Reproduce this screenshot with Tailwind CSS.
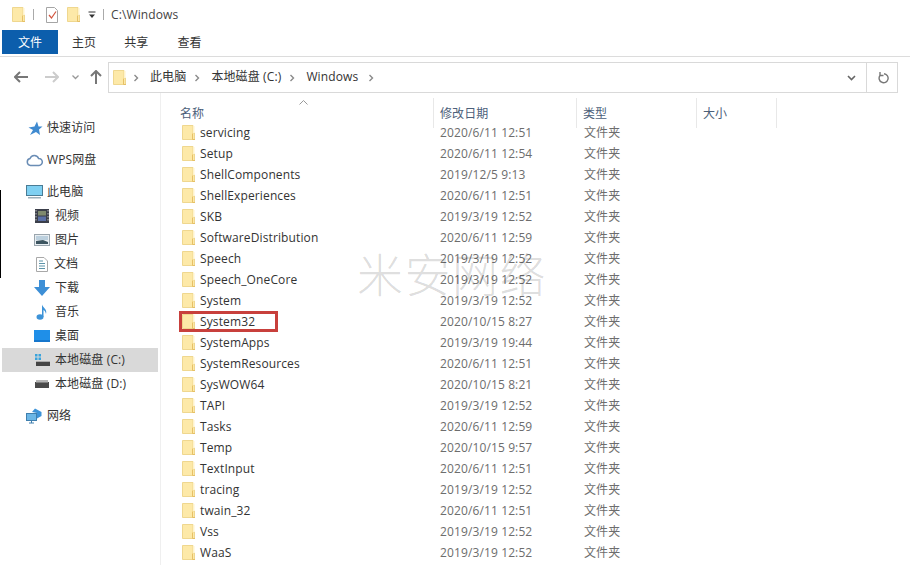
<!DOCTYPE html>
<html lang="zh-CN">
<head>
  <meta charset="UTF-8" />
  <title>C:\Windows</title>
  <script src="https://cdn.jsdelivr.net/npm/@tailwindcss/browser@4"></script>
</head>
<body class="bg-white w-[910px] h-[565px] overflow-hidden relative text-[12px] leading-none tracking-[0.12px] text-[#333] font-['Open_Sans','Noto_Sans_CJK_SC',sans-serif]">
  <svg class="hidden">
    <symbol id="folder" viewBox="0 0 13 15">
      <path d="M0.500 0.500H11V8H12.500V14.500H0.500Z" fill="#fde9a8" stroke="#efd78f"/>
      <path d="M11 1H12.500V8H11Z" fill="#fff3cc"/>
      <path d="M10.500 8.500V14.500H13" fill="none" stroke="#e6c066"/>
    </symbol>
    <symbol id="sep" viewBox="0 0 6 8">
      <path d="M1.500 1L4.500 4L1.500 7" fill="none" stroke="#8a8a8a" stroke-width="1.400"/>
    </symbol>
  </svg>

  <!-- title bar -->
  <div class="h-[29px] flex items-center pl-3">
    <svg class="w-[13px] h-[15px]"><use href="#folder"/></svg>
    <div class="w-px h-[11px] bg-[#aaa] ml-2"></div>
    <svg class="w-[14px] h-4 ml-[11px]" viewBox="0 0 14 16">
      <path d="M1.500 0.500H9.500L12.500 3.500V15.500H1.500Z" fill="#fff" stroke="#a5a5a5"/>
      <path d="M4 8L6.500 11L11 4.500" fill="none" stroke="#d2553f" stroke-width="1.200"/>
    </svg>
    <svg class="w-[13px] h-[15px] ml-2"><use href="#folder"/></svg>
    <svg class="w-2 h-2 ml-2" viewBox="0 0 8 8">
      <path d="M0.500 1H7.500" stroke="#333"/><path d="M1 3.500H7L4 7Z" fill="#333"/>
    </svg>
    <div class="w-px h-[11px] bg-[#aaa] ml-[7px]"></div>
    <span class="ml-[7px] text-[#444]">C:\Windows</span>
  </div>

  <!-- ribbon tabs -->
  <div class="h-[28px] flex items-start border-b border-[#dcdcdc] pl-[2px] pt-px">
    <div class="w-[56px] h-6 pt-[2px] bg-[#0c5eac] text-white flex items-center justify-center">文件</div>
    <div class="ml-[14px] h-6 pt-[2px] flex items-center">主页</div>
    <div class="ml-[28px] h-6 pt-[2px] flex items-center">共享</div>
    <div class="ml-[29px] h-6 pt-[2px] flex items-center">查看</div>
  </div>

  <!-- navigation and address bar -->
  <div class="h-[36px] pt-[5px] flex items-start">
    <div class="w-[108px] h-[30px] shrink-0 flex items-center pl-[14px]">
      <svg class="w-[14px] h-3" viewBox="0 0 14 12"><path d="M6 1L1 6L6 11M1 6H14" fill="none" stroke="#777" stroke-width="2"/></svg>
      <svg class="w-[14px] h-3 ml-[17px]" viewBox="0 0 14 12"><path d="M8 1L13 6L8 11M13 6H0" fill="none" stroke="#ccc" stroke-width="2"/></svg>
      <svg class="w-[7px] h-[5px] ml-[13px]" viewBox="0 0 7 5"><path d="M0.500 0.500L3.500 3.500L6.500 0.500" fill="none" stroke="#999" stroke-width="1.300"/></svg>
      <svg class="w-3 h-[14px] ml-[11px]" viewBox="0 0 12 14"><path d="M1 6L6 1L11 6M6 1V14" fill="none" stroke="#777" stroke-width="2"/></svg>
    </div>
    <div class="w-[790px] h-[31px] border border-[#d9d9d9] flex items-center">
      <svg class="w-[13px] h-[15px] ml-1"><use href="#folder"/></svg>
      <svg class="w-[6px] h-2 ml-[7px]"><use href="#sep"/></svg>
      <span class="ml-[11px] pb-[2px]">此电脑</span>
      <svg class="w-[6px] h-2 ml-[8px]"><use href="#sep"/></svg>
      <span class="ml-[11px] pb-[2px]">本地磁盘 (C:)</span>
      <svg class="w-[6px] h-2 ml-[8px]"><use href="#sep"/></svg>
      <span class="ml-[11px] pb-[2px]">Windows</span>
      <svg class="w-[6px] h-2 ml-[10px]"><use href="#sep"/></svg>
      <svg class="w-[9px] h-[6px] ml-auto" viewBox="0 0 9 6"><path d="M1 1L4.500 4.500L8 1" fill="none" stroke="#666" stroke-width="1.600"/></svg>
      <div class="w-[31px] h-full border-l border-[#d9d9d9] ml-[10px] flex items-center justify-center">
        <svg class="w-3 h-[13px] ml-px" viewBox="0 0 12 13"><path d="M3 1V4.500H6.500M3 4.500A4.500 4.500 0 1 0 7 2.700" fill="none" stroke="#777" stroke-width="1.400"/></svg>
      </div>
    </div>
  </div>

  <div class="flex h-[472px]">
    <!-- side pane -->
    <nav class="w-[161px] shrink-0 border-r border-[#efefef] pt-[23px] pl-[2px]">
      <div class="w-[156px] h-6 flex items-center pl-[26px]">
        <svg class="w-[15px] h-[15px]" viewBox="0 0 15 15"><path d="M9 0.500L10.500 5.500L14.500 5.500L11 8.500L12 14L8 11L2 14L5 9L0.500 6.500L6.500 5.500Z" fill="#3f8ad0"/></svg>
        <span class="ml-1">快速访问</span>
      </div>
      <div class="w-[156px] h-6 flex items-center pl-[24px] mt-2">
        <svg class="w-[17px] h-[14px]" viewBox="0 0 17 14"><path d="M4.500 12.500A3.500 3.500 0 0 1 4 5.600A4.500 4.500 0 0 1 12.600 5.500A3.500 3.500 0 0 1 13 12.500Z" fill="none" stroke="#6a8db5" stroke-width="1.500"/></svg>
        <span class="ml-1">WPS网盘</span>
      </div>
      <div class="w-[156px] h-6 flex items-center pl-[24px] mt-2">
        <svg class="w-[17px] h-[15px]" viewBox="0 0 17 15"><rect x="0.500" y="0.500" width="16" height="10" fill="#7fd0f2" stroke="#4a7c95"/><rect x="2" y="12" width="13" height="1.500" fill="#9db0bb"/></svg>
        <span class="ml-1">此电脑</span>
      </div>
      <div class="w-[156px] h-6 flex items-center pl-[33px]">
        <svg class="w-[14px] h-[14px]" viewBox="0 0 14 14"><rect width="14" height="14" fill="#3b3f4a"/><rect x="3" y="2" width="8" height="4.500" fill="#7f8a6e"/><rect x="3" y="7.500" width="8" height="4.500" fill="#5a6fa5"/><path d="M1 1V13M13 1V13" stroke="#bbb" stroke-dasharray="1.500 1.500"/></svg>
        <span class="ml-[6px]">视频</span>
      </div>
      <div class="w-[156px] h-6 flex items-center pl-[32px]">
        <svg class="w-4 h-3" viewBox="0 0 16 12"><rect x="0.500" y="0.500" width="15" height="11" fill="#e8eef2" stroke="#9aa5ad"/><rect x="2" y="2" width="12" height="4" fill="#bcd0de"/><path d="M2 10V7L9 6L14 8V10Z" fill="#3d5560"/></svg>
        <span class="ml-[5px]">图片</span>
      </div>
      <div class="w-[156px] h-6 flex items-center pl-[34px]">
        <svg class="w-3 h-[15px]" viewBox="0 0 12 15"><path d="M0.500 0.500H8L11.500 4V14.500H0.500Z" fill="#fff" stroke="#a8a8a8"/><path d="M3 4H7M3 6.500H9M3 9H9M3 11.500H9" stroke="#5c93a8"/></svg>
        <span class="ml-[6px]">文档</span>
      </div>
      <div class="w-[156px] h-6 flex items-center pl-[32px]">
        <svg class="w-4 h-4" viewBox="0 0 16 16"><path d="M5 0H11V7H16L8 16L0 7H5Z" fill="#3d8fd6"/></svg>
        <span class="ml-[5px]">下载</span>
      </div>
      <div class="w-[156px] h-6 flex items-center pl-[33px]">
        <svg class="w-[14px] h-4" viewBox="0 0 14 16"><ellipse cx="5" cy="13" rx="3.500" ry="2.700" fill="#3d93d8"/><path d="M7 13V0.500C8 4 12.500 5 11 10C10.500 7.500 9.500 6.500 8.500 6V13Z" fill="#3d93d8"/></svg>
        <span class="ml-[6px]">音乐</span>
      </div>
      <div class="w-[156px] h-6 flex items-center pl-[32px]">
        <svg class="w-4 h-3" viewBox="0 0 16 12"><rect width="16" height="12" fill="#1f8fe8"/><path d="M0 11H16" stroke="#0f5fb0"/></svg>
        <span class="ml-[5px]">桌面</span>
      </div>
      <div class="w-[156px] h-6 flex items-center pl-[32px] bg-[#d9d9d9]">
        <svg class="w-4 h-[14px]" viewBox="0 0 16 14"><rect x="1" y="1" width="2.500" height="2.500" fill="#39a3dc"/><rect x="4.500" y="1" width="2.500" height="2.500" fill="#39a3dc"/><rect x="1" y="4.500" width="2.500" height="2.500" fill="#39a3dc"/><rect x="4.500" y="4.500" width="2.500" height="2.500" fill="#39a3dc"/><rect x="2" y="9" width="14" height="4" fill="#444"/><rect x="2" y="8" width="14" height="1" fill="#aaa"/></svg>
        <span class="ml-[5px]">本地磁盘 (C:)</span>
      </div>
      <div class="w-[156px] h-6 flex items-center pl-[33px]">
        <svg class="w-[14px] h-2" viewBox="0 0 14 8"><rect y="2" width="14" height="6" fill="#4a4a4a"/><rect x="1" width="12" height="2.500" fill="#b5b5b5"/></svg>
        <span class="ml-[6px]">本地磁盘 (D:)</span>
      </div>
      <div class="w-[156px] h-6 flex items-center pl-[24px] mt-2">
        <svg class="w-4 h-4" viewBox="0 0 16 16"><rect x="0.500" y="5.500" width="10" height="7" fill="#6bb6e6" stroke="#3f7fae"/><path d="M3 15H8M5.500 12.500V15" stroke="#3f7fae"/><path d="M9 0.500L15.500 4V8L11 10.500V5L6 4Z" fill="#3d93d8"/></svg>
        <span class="ml-[5px]">网络</span>
      </div>
    </nav>

    <!-- file list -->
    <main class="flex-1 min-w-0">
      <div class="h-[29px] relative flex items-start text-[#4c607a]">
        <svg class="absolute left-[138px] top-[7px] w-[9px] h-[5px]" viewBox="0 0 9 5"><path d="M0.500 4.500L4.500 0.500L8.500 4.500" fill="none" stroke="#999"/></svg>
        <div class="w-[273px] h-[30px] mt-[5px] border-r border-[#e8e8e8] pl-[19px] pt-[10px]">名称</div>
        <div class="w-[143px] h-[30px] mt-[5px] border-r border-[#e8e8e8] pl-[6px] pt-[10px]">修改日期</div>
        <div class="w-[120px] h-[30px] mt-[5px] border-r border-[#e8e8e8] pl-[6px] pt-[10px]">类型</div>
        <div class="w-[80px] h-[30px] mt-[5px] border-r border-[#e8e8e8] pl-[6px] pt-[10px]">大小</div>
      </div>
      <div class="h-[21px] flex items-center"><svg class="ml-[21px] w-[13px] h-[15px]"><use href="#folder"/></svg><span class="ml-[5px] w-[240px]">servicing</span><span class="w-[144px] text-[#6d6d6d]">2020/6/11 12:51</span><span class="text-[#6d6d6d]">文件夹</span></div>
      <div class="h-[21px] flex items-center"><svg class="ml-[21px] w-[13px] h-[15px]"><use href="#folder"/></svg><span class="ml-[5px] w-[240px]">Setup</span><span class="w-[144px] text-[#6d6d6d]">2020/6/11 12:54</span><span class="text-[#6d6d6d]">文件夹</span></div>
      <div class="h-[21px] flex items-center"><svg class="ml-[21px] w-[13px] h-[15px]"><use href="#folder"/></svg><span class="ml-[5px] w-[240px]">ShellComponents</span><span class="w-[144px] text-[#6d6d6d]">2019/12/5 9:13</span><span class="text-[#6d6d6d]">文件夹</span></div>
      <div class="h-[21px] flex items-center"><svg class="ml-[21px] w-[13px] h-[15px]"><use href="#folder"/></svg><span class="ml-[5px] w-[240px]">ShellExperiences</span><span class="w-[144px] text-[#6d6d6d]">2020/6/11 12:51</span><span class="text-[#6d6d6d]">文件夹</span></div>
      <div class="h-[21px] flex items-center"><svg class="ml-[21px] w-[13px] h-[15px]"><use href="#folder"/></svg><span class="ml-[5px] w-[240px]">SKB</span><span class="w-[144px] text-[#6d6d6d]">2019/3/19 12:52</span><span class="text-[#6d6d6d]">文件夹</span></div>
      <div class="h-[21px] flex items-center"><svg class="ml-[21px] w-[13px] h-[15px]"><use href="#folder"/></svg><span class="ml-[5px] w-[240px]">SoftwareDistribution</span><span class="w-[144px] text-[#6d6d6d]">2020/6/11 12:59</span><span class="text-[#6d6d6d]">文件夹</span></div>
      <div class="h-[21px] flex items-center"><svg class="ml-[21px] w-[13px] h-[15px]"><use href="#folder"/></svg><span class="ml-[5px] w-[240px]">Speech</span><span class="w-[144px] text-[#6d6d6d]">2019/3/19 12:52</span><span class="text-[#6d6d6d]">文件夹</span></div>
      <div class="h-[21px] flex items-center"><svg class="ml-[21px] w-[13px] h-[15px]"><use href="#folder"/></svg><span class="ml-[5px] w-[240px]">Speech_OneCore</span><span class="w-[144px] text-[#6d6d6d]">2019/3/19 12:52</span><span class="text-[#6d6d6d]">文件夹</span></div>
      <div class="h-[21px] flex items-center"><svg class="ml-[21px] w-[13px] h-[15px]"><use href="#folder"/></svg><span class="ml-[5px] w-[240px]">System</span><span class="w-[144px] text-[#6d6d6d]">2019/3/19 12:52</span><span class="text-[#6d6d6d]">文件夹</span></div>
      <div class="h-[21px] flex items-center relative"><svg class="ml-[21px] w-[13px] h-[15px]"><use href="#folder"/></svg><span class="ml-[5px] w-[240px]">System32</span><span class="w-[144px] text-[#6d6d6d]">2020/10/15 8:27</span><span class="text-[#6d6d6d]">文件夹</span><div class="absolute left-[18px] top-0 w-[99px] h-[21px] border-[3px] border-[#c8403c]"></div></div>
      <div class="h-[21px] flex items-center"><svg class="ml-[21px] w-[13px] h-[15px]"><use href="#folder"/></svg><span class="ml-[5px] w-[240px]">SystemApps</span><span class="w-[144px] text-[#6d6d6d]">2019/3/19 19:44</span><span class="text-[#6d6d6d]">文件夹</span></div>
      <div class="h-[21px] flex items-center"><svg class="ml-[21px] w-[13px] h-[15px]"><use href="#folder"/></svg><span class="ml-[5px] w-[240px]">SystemResources</span><span class="w-[144px] text-[#6d6d6d]">2020/6/11 12:51</span><span class="text-[#6d6d6d]">文件夹</span></div>
      <div class="h-[21px] flex items-center"><svg class="ml-[21px] w-[13px] h-[15px]"><use href="#folder"/></svg><span class="ml-[5px] w-[240px]">SysWOW64</span><span class="w-[144px] text-[#6d6d6d]">2020/10/15 8:21</span><span class="text-[#6d6d6d]">文件夹</span></div>
      <div class="h-[21px] flex items-center"><svg class="ml-[21px] w-[13px] h-[15px]"><use href="#folder"/></svg><span class="ml-[5px] w-[240px]">TAPI</span><span class="w-[144px] text-[#6d6d6d]">2019/3/19 12:52</span><span class="text-[#6d6d6d]">文件夹</span></div>
      <div class="h-[21px] flex items-center"><svg class="ml-[21px] w-[13px] h-[15px]"><use href="#folder"/></svg><span class="ml-[5px] w-[240px]">Tasks</span><span class="w-[144px] text-[#6d6d6d]">2020/6/11 12:59</span><span class="text-[#6d6d6d]">文件夹</span></div>
      <div class="h-[21px] flex items-center"><svg class="ml-[21px] w-[13px] h-[15px]"><use href="#folder"/></svg><span class="ml-[5px] w-[240px]">Temp</span><span class="w-[144px] text-[#6d6d6d]">2020/10/15 9:57</span><span class="text-[#6d6d6d]">文件夹</span></div>
      <div class="h-[21px] flex items-center"><svg class="ml-[21px] w-[13px] h-[15px]"><use href="#folder"/></svg><span class="ml-[5px] w-[240px]">TextInput</span><span class="w-[144px] text-[#6d6d6d]">2020/6/11 12:51</span><span class="text-[#6d6d6d]">文件夹</span></div>
      <div class="h-[21px] flex items-center"><svg class="ml-[21px] w-[13px] h-[15px]"><use href="#folder"/></svg><span class="ml-[5px] w-[240px]">tracing</span><span class="w-[144px] text-[#6d6d6d]">2019/3/19 12:52</span><span class="text-[#6d6d6d]">文件夹</span></div>
      <div class="h-[21px] flex items-center"><svg class="ml-[21px] w-[13px] h-[15px]"><use href="#folder"/></svg><span class="ml-[5px] w-[240px]">twain_32</span><span class="w-[144px] text-[#6d6d6d]">2020/6/11 12:51</span><span class="text-[#6d6d6d]">文件夹</span></div>
      <div class="h-[21px] flex items-center"><svg class="ml-[21px] w-[13px] h-[15px]"><use href="#folder"/></svg><span class="ml-[5px] w-[240px]">Vss</span><span class="w-[144px] text-[#6d6d6d]">2019/3/19 12:52</span><span class="text-[#6d6d6d]">文件夹</span></div>
      <div class="h-[21px] flex items-center"><svg class="ml-[21px] w-[13px] h-[15px]"><use href="#folder"/></svg><span class="ml-[5px] w-[240px]">WaaS</span><span class="w-[144px] text-[#6d6d6d]">2019/3/19 12:52</span><span class="text-[#6d6d6d]">文件夹</span></div>
    </main>
  </div>

  <!-- watermark -->
  <div class="absolute left-[357px] top-[247px] text-[46px] tracking-[1.500px] leading-[54px] font-light text-black/15 pointer-events-none">米安网络</div>
  <!-- window edge behind the capture -->
  <div class="absolute left-0 top-[190px] w-px h-[88px] bg-black"></div>
</body>
</html>
